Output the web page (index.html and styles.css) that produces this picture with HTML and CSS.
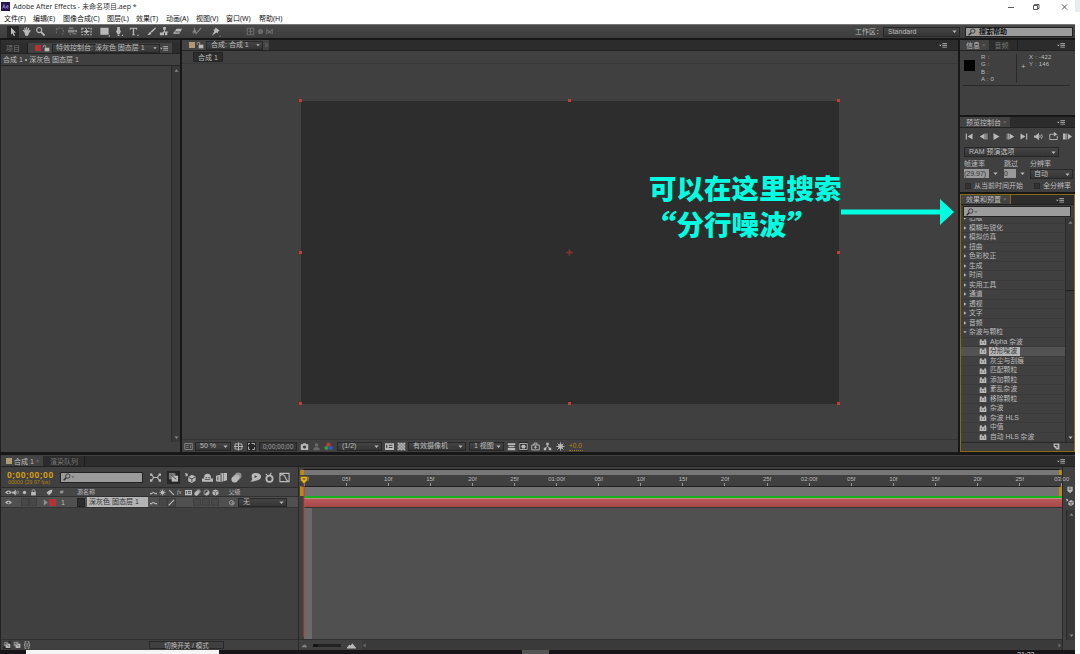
FILE: index.html
```html
<!DOCTYPE html>
<html lang="zh-CN">
<head>
<meta charset="utf-8">
<title>Adobe After Effects</title>
<link rel="stylesheet" href="styles.css">
</head>
<body>
<svg class="defs" aria-hidden="true">
  <symbol id="arrow" viewBox="0 0 12 12"><path d="M4 1.5l5 5-2.2.2 1.3 2.8-1.4.6-1.2-2.8L4 8.8z"/></symbol>
  <symbol id="hand" viewBox="0 0 12 12"><path d="M3.8 7L1.6 4.6l.9-.6 1.4 1.2L3.6 2l1-.2.9 2.8L5.7 1h1l.1 3.6L8 1.8l1 .3-.8 3.2L10 4.2l.7.6-2 3-1 2.7H4.6z"/></symbol>
  <symbol id="lens" viewBox="0 0 12 12"><circle cx="4.6" cy="4.4" r="2.8" class="ln"/><path d="M6.5 6.5l4 4" class="ln w2"/></symbol>
  <symbol id="find" viewBox="0 0 12 12"><circle cx="7.200" cy="4.600" r="3.300" class="ln"/><path d="M4.800 7L1 11" class="ln w2"/></symbol>
  <symbol id="rot" viewBox="0 0 12 12"><path d="M2 3l3-.2M3 8a4 4 0 1 1 6 1" class="ln dash"/></symbol>
  <symbol id="cam" viewBox="0 0 12 12"><path d="M1 4h7v1l3-1v3L8 6v1H1zM2 1.5h5V3H2zM3 8h1v2H3zM6 8h4v1H6z"/></symbol>
  <symbol id="anchor" viewBox="0 0 12 12"><path d="M1 2.5h10v7H1z" class="ln dash"/><path d="M6 3l1 2 3 1-3 1-1 2-1-2-3-1 3-1z"/></symbol>
  <symbol id="rect" viewBox="0 0 12 12"><path d="M1.500 2h9v7.500h-9zM12 9.500v2h-2z"/></symbol>
  <symbol id="pen" viewBox="0 0 12 12"><path d="M4.5 1h3v3l1.2 2L7 9H5L3.300 6l1.200-2zM5 9.500h2V11H5zM11 9v2H9z"/></symbol>
  <symbol id="type" viewBox="0 0 12 12"><path d="M2 1.800h8v2.200H9.200L8.800 3H6.700v6l1 .6v.6H4.300v-.6l1-.6V3H3.200l-.4 1H2zM11.500 9v2h-2z"/></symbol>
  <symbol id="brush" viewBox="0 0 12 12"><path d="M10 1.500L11 2.500 6.500 7 5 5.900zM4.700 6.300L6 7.500C5 9.500 3.500 10 1.500 9.800 3 9 3 7 4.700 6.300z"/></symbol>
  <symbol id="stamp" viewBox="0 0 12 12"><path d="M4.500 1h3v3h-1v2H10v1H9v3H6.500V7.200h-1V10H1V7h3V6h1.500V4h-1z"/></symbol>
  <symbol id="eraser" viewBox="0 0 12 12"><path d="M5 3h6L8 8.500H1z"/><path d="M3.500 6.500H9" class="cut"/></symbol>
  <symbol id="roto" viewBox="0 0 12 12"><path d="M3 2v3l-2 2h2l-.5 3L4 7l2 1-1-3 1-1H4V2z"/><path d="M11 2L5 9" class="ln"/></symbol>
  <symbol id="pin" viewBox="0 0 12 12"><path d="M6 1.500L10.500 5 9 6 8.500 8 7 7 2 10.500 4.800 5.500 3.500 4l2-.5zM11.500 10v1.500H10z"/></symbol>
  <symbol id="box" viewBox="0 0 12 12"><path d="M2.500 2.500h7v7h-7zM6 3v6M4 6h4" class="ln"/></symbol>
  <symbol id="dot" viewBox="0 0 12 12"><circle cx="6" cy="6" r="2.800"/></symbol>
  <symbol id="cutx" viewBox="0 0 12 12"><path d="M3 3v6M9 3v6M3 4l5 4M9 4L4 8" class="ln"/></symbol>
  <symbol id="lock" viewBox="0 0 12 12"><path d="M4 5.500h7v5.500H4z"/><path d="M5.500 5.500V3.500C5.500 1.500 2 1.500 2 3.500V5" class="ln"/></symbol>
  <symbol id="padlock" viewBox="0 0 12 12"><path d="M2 5h8v6H2z"/><path d="M3.500 5V3.500a2.500 2.500 0 0 1 5 0V5" class="ln"/></symbol>
  <symbol id="menu" viewBox="0 0 12 12"><path d="M0 5.500h4L2 7.700zM5 3.500h7v1.200H5zM5 6h7v1.200H5zM5 8.500h7v1.200H5z"/></symbol>
  <symbol id="down" viewBox="0 0 12 12"><path d="M1 3.500h10L6 9.500z"/></symbol>
  <symbol id="up" viewBox="0 0 12 12"><path d="M1 9h10L6 3z"/></symbol>
  <symbol id="right" viewBox="0 0 12 12"><path d="M3 1v10l7-5z"/></symbol>
  <symbol id="first" viewBox="0 0 12 12"><path d="M1 2h1.500v8H1zM10 2v8L3.500 6z"/></symbol>
  <symbol id="prev" viewBox="0 0 12 12"><path d="M7.500 2v8L1 6zM8.500 2h1v8h-1zM10.200 2h1v8h-1z"/></symbol>
  <symbol id="play" viewBox="0 0 12 12"><path d="M2 1.500v9L10 6z"/></symbol>
  <symbol id="next" viewBox="0 0 12 12"><path d="M4.500 2v8L11 6zM2.800 2h1v8h-1zM1 2h1v8H1z"/></symbol>
  <symbol id="ramplay" viewBox="0 0 12 12"><path d="M0 2h3.500v8H0zM4.500 2h1v8h-1zM6.500 2v8L12 6z"/></symbol>
  <symbol id="last" viewBox="0 0 12 12"><path d="M9.500 2H11v8H9.500zM2 2v8l6.500-4z"/></symbol>
  <symbol id="sound" viewBox="0 0 12 12"><path d="M0 4.500h2.500L6.500 1v10L2.500 7.500H0z"/><path d="M8 4v4M10 3q2 3 0 6" class="ln"/></symbol>
  <symbol id="loop" viewBox="0 0 12 12"><path d="M3 3H1v7h10V5M3 3h5" class="ln"/><path d="M6.500 0L11 3 6.500 6z"/></symbol>
  <symbol id="fx" viewBox="0 0 12 12"><path d="M1 4l1-2h2v2h4V2h2l1 2v6.500H1z"/><path d="M4 5.500v3M8 5.500v3" class="cut"/></symbol>
  <symbol id="frame" viewBox="0 0 12 12"><path d="M1 2h10v8H1z" class="ln"/><path d="M3 4h3v1H3zM3 7h3v1H3zM8 4h1v4H8z"/></symbol>
  <symbol id="grid" viewBox="0 0 12 12"><path d="M1.500 2.500h9v7h-9zM6 .5v11M0 6h12" class="ln"/></symbol>
  <symbol id="mask" viewBox="0 0 12 12"><path d="M2 4V2h2M6 2h4v2M10 7v3H7M4 10H2V6" class="ln"/></symbol>
  <symbol id="photo" viewBox="0 0 12 12"><path fill-rule="evenodd" d="M1 3h2.500l1-1.500h3l1 1.500H11v7.500H1zM6 4.500a2.200 2.200 0 1 0 .01 0z"/></symbol>
  <symbol id="expo" viewBox="0 0 12 12"><path d="M1 4h10v6.500H1zM4 1.500h4V4M4 1.500V4M6 5v4M4 7h4" class="ln"/></symbol>
  <symbol id="person" viewBox="0 0 12 12"><circle cx="6" cy="4" r="2.300"/><path d="M2 11V8.500L4 7h4l2 1.500V11z"/></symbol>
  <symbol id="rgb" viewBox="0 0 12 12"><circle cx="6" cy="3.500" r="2.800" fill="#c23a38"/><circle cx="3.200" cy="8" r="2.800" fill="#369a42"/><circle cx="8.800" cy="8" r="2.800" fill="#3655c8"/></symbol>
  <symbol id="roi" viewBox="0 0 12 12"><path fill-rule="evenodd" d="M0 1.500h12v9H0zM5 3.500v1.500h5V3.500zM5 6.500V8h5V6.500zM1.500 3.500H3V8H1.500z"/></symbol>
  <symbol id="checker" viewBox="0 0 12 12"><path d="M1 1h10v10H1z" opacity=".55"/><path d="M1 1h2v2H1zM5 1h2v2H5zM9 1h2v2H9zM3 3h2v2H3zM7 3h2v2H7zM1 5h2v2H1zM5 5h2v2H5zM9 5h2v2H9zM3 7h2v2H3zM7 7h2v2H7zM1 9h2v2H1zM5 9h2v2H5zM9 9h2v2H9z"/></symbol>
  <symbol id="pixel" viewBox="0 0 12 12"><path d="M1 1.500h10V4H1zM2 5h8v2H2zM1 8h10v3H1z"/></symbol>
  <symbol id="fast" viewBox="0 0 12 12"><path d="M1 2h10v8H1z" class="ln"/><path d="M4 3.500h4l1 2.500-1 2.500H4L3 6z"/></symbol>
  <symbol id="tree" viewBox="0 0 12 12"><path d="M4.300 1h3.400v3.400H4.300zM1 7.500h3.400V11H1zM7.600 7.500H11V11H7.600z"/><path d="M6 4v2L3 8M6 6l3 2" class="ln"/></symbol>
  <symbol id="burst" viewBox="0 0 12 12"><circle cx="6" cy="6" r="3.200"/><path d="M6 .5v11M.5 6h11M2 2l8 8M10 2l-8 8" class="ln"/></symbol>
  <symbol id="link" viewBox="0 0 12 12"><path d="M2 3l2 3-2 3M10 3L8 6l2 3M3 6h6" class="ln"/><path d="M-1 1.500h3.500v2.500H-1zM9.500 1.500H13v2.500H9.500zM-1 8h3.500v2.500H-1zM9.500 8H13v2.500H9.500z"/></symbol>
  <symbol id="copy" viewBox="0 0 12 12"><path d="M1 1h7v7H1z" opacity=".55"/><path d="M4 4h7v6.500H4z"/><path d="M3 3l6 5" class="cut"/></symbol>
  <symbol id="cube" viewBox="0 0 12 12"><path d="M0 1l3 1v2L1 5zM3.500 5.500L7.500 3 11.500 5v4.500L7.500 12l-4-2z"/><path d="M4 6l3.500 1.500V11M7.500 7.500L11 5.500" class="cut"/></symbol>
  <symbol id="cube3" viewBox="0 0 12 12"><path d="M1 3l5-2 5 2v6l-5 2.500L1 9z"/><path d="M1.500 3.500L6 5.500V11M6 5.500l4.500-2" class="cut"/></symbol>
  <symbol id="shy" viewBox="0 0 12 12"><path d="M0 7h2.200Q2 2 6 2t3.800 5H12v3.500H0z"/><path d="M4 6h1.500M7 6h1.500M3 8h6" class="cut"/></symbol>
  <symbol id="blend" viewBox="0 0 12 12"><path d="M0 4l5-1v8l-5-1zM4 2l4-1v9l-2 1V3zM8.500 1H12v8l-3.500 1z"/><path d="M2 5v4" class="cut"/></symbol>
  <symbol id="blur" viewBox="0 0 12 12"><circle cx="4" cy="8" r="3.500"/><circle cx="6" cy="6" r="3.500" opacity=".8"/><circle cx="8" cy="4" r="3.500" opacity=".65"/></symbol>
  <symbol id="brain" viewBox="0 0 12 12"><path fill-rule="evenodd" d="M2 10l-2 1.500L2.500 8Q0 1 6 1t6 4-6 4.500q-2 1.500-4 .5zM5 3.500v3l3-1.500z"/></symbol>
  <symbol id="clock" viewBox="0 0 12 12"><path d="M2 2l2 2M8 1L6 4" class="ln"/><circle cx="6" cy="7.300" r="3.400" class="ln w2"/></symbol>
  <symbol id="graph" viewBox="0 0 12 12"><path d="M1 1.500h10v9H1zM1 4q4-3 6 2t4 4" class="ln"/></symbol>
  <symbol id="eye" viewBox="0 0 12 12"><path fill-rule="evenodd" d="M0 6q6-7 12 0-6 6-12 0zM6 4.500a1.700 1.700 0 1 0 .01 0z"/></symbol>
  <symbol id="tag" viewBox="0 0 12 12"><path d="M1 6l5-4 5-1-1 5-5 5-1-2-2-1z"/></symbol>
  <symbol id="slash" viewBox="0 0 12 12"><path d="M2 2l8 8" class="ln w2"/></symbol>
  <symbol id="stroke" viewBox="0 0 12 12"><path d="M1 11L10.500 1.500" class="ln w2"/></symbol>
  <symbol id="flat" viewBox="0 0 12 12"><path d="M0 8h3q1-4 6 0h3" class="ln w2"/></symbol>
  <symbol id="adj" viewBox="0 0 12 12"><circle cx="6" cy="6" r="4.500" class="ln"/><path d="M9.200 2.800a4.500 4.500 0 0 1-6.400 6.400z"/></symbol>
  <symbol id="spiral" viewBox="0 0 12 12"><path d="M6 6q1-2 2.500 0T6 9 2.500 6 6 2.500 10.500 6 6 11" class="ln"/></symbol>
  <symbol id="braces" viewBox="0 0 12 12"><path d="M5 1H3v4L1.500 6 3 7v4h2M7 1h2v4l1.500 1L9 7v4H7M6 3v6" class="ln"/></symbol>
  <symbol id="hill" viewBox="0 0 12 12"><path d="M-1 10l4-5 2 1 2-3 6 7z"/></symbol>
  <symbol id="newdoc" viewBox="0 0 12 12"><path fill-rule="evenodd" d="M1 1h10v10H6L1 6zM3 3v2h3v3h2V3z"/></symbol>
  <symbol id="shield" viewBox="0 0 12 12"><path d="M2 1h8v6l-4 4-4-4z"/><path d="M4 3h4M4 5h4" class="cut"/></symbol>
</svg>

<div class="window">
  <header class="caption">
    <svg class="logo" viewBox="0 0 9 9"><rect width="9" height="9" fill="#281450"/><path d="M1.500 6.500L3 2.500l1.500 4M2 5.200h2M7.500 5.900q-2 1-2-1t1.900-1q.4 1-1.900 1" fill="none" stroke="#a894e6" stroke-width=".7"/></svg>
    <span class="caption-text">Adobe After Effects - 未命名项目.aep *</span>
    <svg class="winbtns" viewBox="0 0 60 10"><path d="M0 5.500h6M54 2.500l5 5M59 2.500l-5 5" /><path d="M25.500 3.500h4v4h-4zM26.500 3.500V2.500h4.500v4h-1.500" /></svg>
  </header>
  <nav class="menubar"><span>文件(F)</span><span>编辑(E)</span><span>图像合成(C)</span><span>图层(L)</span><span>效果(T)</span><span>动画(A)</span><span>视图(V)</span><span>窗口(W)</span><span>帮助(H)</span></nav>

  <div class="app">
    <div class="tools">
      <svg class="on"><use href="#arrow"/></svg><svg><use href="#hand"/></svg><svg><use href="#lens"/></svg><svg class="dim"><use href="#rot"/></svg><svg class="half"><use href="#cam"/></svg><svg><use href="#anchor"/></svg><svg><use href="#rect"/></svg><svg><use href="#pen"/></svg><svg><use href="#type"/></svg><svg><use href="#brush"/></svg><svg><use href="#stamp"/></svg><svg><use href="#eraser"/></svg><svg class="half"><use href="#roto"/></svg><svg><use href="#pin"/></svg><svg class="dim"><use href="#box"/></svg><svg class="dim"><use href="#dot"/></svg><svg class="dim"><use href="#cutx"/></svg>
      <span class="ws-label">工作区：</span>
      <div class="select ws">Standard<svg><use href="#down"/></svg></div>
      <div class="field help"><svg><use href="#find"/></svg>搜索帮助</div>
    </div>

    <div class="upper">
      <section class="panel effect-controls">
        <div class="tabs"><span class="tab off project">项目</span><div class="tab live"><i class="chip red"></i><svg><use href="#lock"/></svg><div class="select tabsel">特效控制台: 深灰色 固态层 1<svg><use href="#down"/></svg></div><svg class="pm"><use href="#menu"/></svg></div></div>
        <div class="crumb">合成 1 • 深灰色 固态层 1</div>
        <div class="ec-body"><div class="vscroll"><svg><use href="#up"/></svg><svg><use href="#down"/></svg></div></div>
      </section>

      <section class="panel comp">
        <div class="tabs"><div class="tab live"><i class="chip tan"></i><svg><use href="#lock"/></svg><div class="select compsel">合成: 合成 1<svg><use href="#down"/></svg></div><i class="close"></i></div><svg class="pm"><use href="#menu"/></svg></div>
        <div class="subtabs"><span>合成 1</span></div>
        <div class="viewer">
          <svg class="stage" viewBox="0 0 540 305"><rect x="1" y="1" width="538" height="303" fill="#2d2d2d"/><g fill="#c23c3a"><path d="M-1 -1h3v3h-3zM268 -1h3v3h-3zM537 -1h3v3h-3zM-1 151h3v3h-3zM537 151h3v3h-3zM-1 302h3v3h-3zM268 302h3v3h-3zM537 302h3v3h-3z"/></g><g fill="none" stroke="#8a3330" stroke-width=".8"><circle cx="269.500" cy="152.500" r="1.800"/><path d="M266 152.500h7M269.500 149v7"/></g></svg>
          <div class="note"><div>可以在这里搜索</div><div class="note2"><span class="ql">“</span><span>分行噪波</span><span class="qr">”</span></div></div>
          <svg class="pointer" viewBox="0 0 114 26"><path d="M0 10.500h99V0l14 13-14 13V15.500H0z" fill="#00ffe0"/></svg>
        </div>
        <div class="viewbar">
          <svg class="half"><use href="#frame"/></svg><div class="select">50 %<svg><use href="#down"/></svg></div><svg><use href="#grid"/></svg><svg class="on"><use href="#mask"/></svg><div class="time">0;00;00;00</div><svg><use href="#photo"/></svg><svg class="dim"><use href="#person"/></svg><svg><use href="#rgb"/></svg><div class="select">(1/2)<svg><use href="#down"/></svg></div><svg><use href="#roi"/></svg><svg><use href="#checker"/></svg><div class="select">有效摄像机<svg><use href="#down"/></svg></div><div class="select">1 视图<svg><use href="#down"/></svg></div><svg><use href="#pixel"/></svg><svg class="on"><use href="#fast"/></svg><svg><use href="#expo"/></svg><svg><use href="#tree"/></svg><svg><use href="#burst"/></svg><span class="exposure">+0.0</span>
        </div>
      </section>

      <aside class="side">
        <section class="panel info">
          <div class="tabs"><span class="tab live">信息<i>×</i></span><span class="tab off">音频</span><svg class="pm"><use href="#menu"/></svg></div>
          <div class="info-body"><i class="swatch"></i><div class="rgba"><span>R :</span><span>G :</span><span>B :</span><span>A : 0</span></div><i class="plus">+</i><div class="xy"><span>X : -422</span><span>Y : 146</span></div></div>
        </section>
        <section class="panel preview">
          <div class="tabs"><span class="tab live">预览控制台<i>×</i></span><svg class="pm"><use href="#menu"/></svg></div>
          <div class="transport"><svg><use href="#first"/></svg><svg><use href="#prev"/></svg><svg><use href="#play"/></svg><svg><use href="#next"/></svg><svg><use href="#last"/></svg><svg><use href="#sound"/></svg><svg><use href="#loop"/></svg><svg><use href="#ramplay"/></svg></div>
          <div class="select ram">RAM 预演选项<svg><use href="#down"/></svg></div>
          <div class="pgrid"><span>帧速率</span><span>跳过</span><span>分辨率</span><div class="combo"><b>(29.97)</b><svg><use href="#down"/></svg></div><div class="combo"><b>0</b><svg><use href="#down"/></svg></div><div class="select">自动<svg><use href="#down"/></svg></div></div>
          <div class="checks"><i></i><span>从当前时间开始</span><i></i><span>全分辨率</span></div>
        </section>
        <section class="panel effects">
          <div class="tabs"><span class="tab live">效果和预置<i>×</i></span><svg class="pm"><use href="#menu"/></svg></div>
          <div class="field fxsearch"><svg><use href="#find"/></svg><svg class="tiny"><use href="#down"/></svg></div>
          <div class="fx-main">
            <ul class="fxlist">
              <li><svg><use href="#right"/></svg>旧版</li><li><svg><use href="#right"/></svg>模糊与锐化</li><li><svg><use href="#right"/></svg>模拟仿真</li><li><svg><use href="#right"/></svg>扭曲</li><li><svg><use href="#right"/></svg>色彩校正</li><li><svg><use href="#right"/></svg>生成</li><li><svg><use href="#right"/></svg>时间</li><li><svg><use href="#right"/></svg>实用工具</li><li><svg><use href="#right"/></svg>通道</li><li><svg><use href="#right"/></svg>透视</li><li><svg><use href="#right"/></svg>文字</li><li><svg><use href="#right"/></svg>音频</li><li><svg><use href="#down"/></svg>杂波与颗粒</li>
              <li class="fx"><svg><use href="#fx"/></svg>Alpha 杂波</li><li class="fx sel"><svg><use href="#fx"/></svg><b>分形噪波</b></li><li class="fx"><svg><use href="#fx"/></svg>灰尘与刮痕</li><li class="fx"><svg><use href="#fx"/></svg>匹配颗粒</li><li class="fx"><svg><use href="#fx"/></svg>添加颗粒</li><li class="fx"><svg><use href="#fx"/></svg>紊乱杂波</li><li class="fx"><svg><use href="#fx"/></svg>移除颗粒</li><li class="fx"><svg><use href="#fx"/></svg>杂波</li><li class="fx"><svg><use href="#fx"/></svg>杂波 HLS</li><li class="fx"><svg><use href="#fx"/></svg>中值</li><li class="fx"><svg><use href="#fx"/></svg>自动 HLS 杂波</li>
            </ul>
            <div class="vscroll"><svg><use href="#up"/></svg><i class="thumb"></i><svg><use href="#down"/></svg></div>
          </div>
          <div class="fx-foot"><svg><use href="#newdoc"/></svg></div>
        </section>
      </aside>
    </div>

    <section class="timeline">
      <div class="tabs"><div class="tab live"><i class="chip tan"></i>合成 1<i class="x">×</i></div><span class="tab off">渲染队列</span><svg class="pm"><use href="#menu"/></svg></div>
      <div class="tl-main">
        <div class="tl-left">
          <div class="tl-head">
            <div class="tc"><b>0;00;00;00</b><small>00000 (29.97 fps)</small></div>
            <div class="field"><svg><use href="#find"/></svg><svg class="tiny"><use href="#down"/></svg></div>
            <svg><use href="#link"/></svg><svg class="on"><use href="#copy"/></svg><svg><use href="#cube"/></svg><svg><use href="#shy"/></svg><svg><use href="#blend"/></svg><svg><use href="#blur"/></svg><svg><use href="#brain"/></svg><svg><use href="#clock"/></svg><svg><use href="#graph"/></svg>
          </div>
          <div class="cols"><svg><use href="#eye"/></svg><svg><use href="#sound"/></svg><svg><use href="#dot"/></svg><svg><use href="#padlock"/></svg><svg><use href="#tag"/></svg><span>#</span><span>源名称</span><svg><use href="#flat"/></svg><svg><use href="#burst"/></svg><svg><use href="#slash"/></svg><em>fx</em><svg><use href="#roi"/></svg><svg><use href="#blur"/></svg><svg><use href="#adj"/></svg><svg><use href="#cube3"/></svg><span>父级</span></div>
          <div class="layer"><svg><use href="#eye"/></svg><i class="cell"></i><i class="cell"></i><svg class="half"><use href="#right"/></svg><i class="chip red"></i><span>1</span><i class="solid"></i><b>深灰色 固态层 1</b><svg><use href="#flat"/></svg><i class="cell"></i><svg class="cell"><use href="#stroke"/></svg><i class="cell"></i><i class="cell"></i><i class="cell"></i><svg><use href="#spiral"/></svg><div class="select">无<svg><use href="#down"/></svg></div></div>
          <div class="tl-space"></div>
          <div class="tl-foot"><svg class="on"><use href="#copy"/></svg><svg><use href="#copy"/></svg><svg><use href="#braces"/></svg><div class="toggle">切换开关 / 模式</div></div>
        </div>
        <div class="tl-right">
          <div class="navigator"></div>
          <div class="ruler"><span>:00f</span><span>05f</span><span>10f</span><span>15f</span><span>20f</span><span>25f</span><span>01:00f</span><span>05f</span><span>10f</span><span>15f</span><span>20f</span><span>25f</span><span>02:00f</span><span>05f</span><span>10f</span><span>15f</span><span>20f</span><span>25f</span><span>03:00</span></div>
          <div class="workarea"></div>
          <div class="cached"></div>
          <div class="bar"></div>
          <div class="lane"><i></i></div>
          <div class="tl-zoom"><svg class="s"><use href="#hill"/></svg><i class="slider"></i><svg><use href="#hill"/></svg><div class="hscroll"><svg class="flip dim"><use href="#right"/></svg><svg class="dim"><use href="#right"/></svg></div></div>
          <svg class="cti" viewBox="0 0 10 162"><path d="M4 8v162" stroke="#c43c3c"/><path d="M.5 1.500h7V5L4 9 .5 5z" fill="#e2b322" stroke="#6b5208" stroke-width=".6"/><path d="M2.500 3h3v2h-3z" fill="#a07610"/></svg>
        </div>
        <div class="tl-edge"><svg class="marker"><use href="#shield"/></svg><svg class="lay"><use href="#cube"/></svg><div class="vscroll"><svg><use href="#up"/></svg><svg><use href="#down"/></svg></div></div>
      </div>
    </section>
    <footer class="taskbar"><i class="tb-white"></i><i class="tb-grey"></i><span>21:22</span></footer>
  </div>
</div>
</body>
</html>
```

FILE: styles.css
```css
* { box-sizing: border-box; }
body {
  margin: 0; width: 1080px; height: 654px; overflow: hidden; background: #fff;
  font: 7px/9px "Liberation Sans", "Noto Sans CJK SC", sans-serif;
  color: #bcbcbc; white-space: nowrap; --ink: #b9b9b9;
}
.defs { position: absolute; width: 0; height: 0; }
svg { display: block; width: 10px; height: 10px; fill: #b9b9b9; stroke: none; flex: none; overflow: visible; }
.ln { fill: none; stroke: var(--ink); stroke-width: 1.2; }
.w2 { stroke-width: 2; }
.dash { stroke-dasharray: 2 1.2; }
.cut { fill: none; stroke: #444; stroke-width: 1; }
.dim { opacity: .35; }
.half { opacity: .6; }
.on { background: #262626; }
.flip { transform: scaleX(-1); }
i, em { font-style: normal; }
em { font-style: italic; font-family: "Liberation Serif", serif; }
b { font-weight: normal; }

.window { width: 1080px; height: 654px; display: flex; flex-direction: column; }
.caption { height: 12px; flex: none; display: flex; align-items: center; padding-left: 1px; color: #333; background: linear-gradient(90deg, #fff 1075px, #e9ecf0 1075px); }
.logo { width: 9px; height: 9px; }
.caption-text { margin: 1px 0 0 3px; font: 7px/11px "Noto Sans", "Noto Sans CJK SC", sans-serif; }
.winbtns { width: 60px; height: 10px; margin: 1px 12px 0 auto; fill: none; stroke: #333; stroke-width: .8; }
.menubar { height: 12px; flex: none; display: grid; align-items: center; padding-left: 4px; color: #111; font-family: "Noto Sans", "Noto Sans CJK SC", sans-serif;
  grid-template-columns: 29px 30px 44px 29px 30px 30px 30px 33px 30px; }

.app { width: 1075px; height: 630px; display: flex; flex-direction: column; background: #171717; }
.tools { height: 14px; flex: none; display: grid; align-items: center; padding-left: 7px; border-top: 1px solid #777; background: linear-gradient(#484848, #3c3c3c);
  grid-template-columns: 14px 14px 19px 13px 14px 18px 14px 15px 18px 13px 13px 19px 19px 35px 10px 9px 591px 28px 82px 108px; }
.tools > svg { width: 11px; height: 11px; }
.tools > svg.on { width: 12px; height: 12px; }
.select { display: flex; justify-content: space-between; align-items: center; height: 9px; padding: 0 2px 0 4px; background: linear-gradient(#444, #353535); border: 1px solid #272727; line-height: 8px; }
.select svg { width: 5px; height: 5px; }
.select.ws { width: 77px; height: 10px; }
.field { display: flex; align-items: center; height: 9px; background: #9b9b9b; border: 1px solid #222; color: #111; --ink: #2c2c2c; }
.field svg { width: 8px; height: 8px; margin-left: 2px; fill: #444; }
.field svg.tiny { width: 4px; height: 4px; margin-left: 0; fill: #666; }
.help { width: 108px; height: 10px; gap: 3px; font-weight: bold; }

.upper { height: 417px; flex: none; display: grid; grid-template-columns: 180px 776px 115px; column-gap: 2px; padding: 2px 0 3px; }
.panel { display: flex; flex-direction: column; background: #404040; min-width: 0; min-height: 0; }
.tabs { display: flex; flex: none; height: 11px; background: #2c2c2c; border-bottom: 1px solid #222; }
.tab { display: flex; align-items: center; padding: 0 5px; }
.tab.live { background: #434343; }
.tab.off { color: #777; border-right: 1px solid #1c1c1c; }
.tab i:not(.chip) { color: #777; margin-left: 2px; font-size: 6px; }
.pm { width: 8px; height: 8px; margin: 1px 10px 0 auto; }
.chip { width: 6px; height: 6px; flex: none; }
.red { background: #b43236; }
.tan { background: #ae9a75; }
.effect-controls { border-left: 1px solid #222; padding-bottom: 10px; }
.effect-controls .tabs { height: 14px; border-top: 3px solid #303030; }
.effect-controls .project { width: 27px; }
.effect-controls .tab.live { width: 144px; padding: 0 0 0 7px; }
.tab svg { width: 8px; height: 8px; }
.tab.live .select svg { width: 4px; height: 4px; }
.select.tabsel { width: 108px; margin-left: 2px; padding-left: 3px; }
.tab.live svg.pm { margin: 0 4px 0 auto; }
.effect-controls .tab > svg:nth-child(2) { margin-left: 1px; }
.crumb { height: 12px; flex: none; padding: 1px 2px; border-bottom: 1px solid #252525; }
.ec-body { flex: 1; display: flex; justify-content: flex-end; }
.vscroll { width: 9px; display: flex; flex-direction: column; align-items: center; justify-content: space-between; padding: 2px 0; background: #383838; border-left: 1px solid #2a2a2a; }
.vscroll svg { width: 5px; height: 5px; opacity: .6; }

.comp .tab { padding: 0 1px 0 7px; }
.comp .tab > svg { margin-left: 1px; }
.select.compsel { width: 57px; margin-left: 2px; }
.close { width: 3px; height: 4px; background: #555; }
.comp .pm { margin-right: 11px; }
.subtabs { height: 13px; flex: none; padding: 1px 0 0 11px; border-bottom: 1px solid #383838; }
.subtabs span { display: block; width: 30px; height: 10px; background: #2c2c2c; border: 1px solid #242424; text-align: center; line-height: 9px; }
.viewer { flex: 1; min-height: 0; position: relative; padding: 36px 0 0 118px; }
.stage { width: 540px; height: 305px; }
.note { position: absolute; left: 467px; top: 106px; color: #00ffe0; font: 900 27.500px/35.500px "Noto Sans CJK SC", sans-serif; }
.note2 { display: flex; }
.ql, .qr { display: block; width: 27.500px; }
.ql { transform: scale(1.250, 1.100) skewX(-10deg); transform-origin: 100% 30%; }
.qr { transform: scale(1.250, 1.100) skewX(-10deg); transform-origin: 0 30%; }
.pointer { position: absolute; left: 659px; top: 135px; width: 114px; height: 26px; z-index: 2; }
.viewbar { height: 13px; flex: none; display: grid; align-items: center; padding-left: 2px; border-top: 1px solid #353535;
  grid-template-columns: 11px 39px 13px 12px 41px 12px 12px 13px 48px 12px 11px 61px 38px 12px 12px 12px 13px 13px 20px; }
.viewbar > svg { width: 9px; height: 9px; }
.viewbar .select { margin-right: 3px; }
.viewbar .time { width: 38px; height: 9px; line-height: 8px; text-align: center; border: 1px solid #282828; background: #383838; color: #999; font-size: 6.500px; }
.exposure { width: 14px; color: #b88616; border-bottom: 1px dotted #9a7012; line-height: 8px; font-size: 6.500px; }

.side { display: flex; flex-direction: column; gap: 2px; min-width: 0; min-height: 0; }
.side .tab { padding: 0 3px 0 6px; }
.info { height: 75px; flex: none; }
.info .off { padding-right: 8px; }
.info-body { height: 35px; margin: 0 5px 0 3px; display: grid; grid-template-columns: 16px 38px 12px 30px; border-bottom: 1px solid #292929; padding-top: 3px; font-size: 6px; line-height: 7.300px; letter-spacing: .2px; }
.swatch { width: 11px; height: 11px; margin-top: 6px; margin-left: 1px; background: #000; }
.rgba, .xy { display: flex; flex-direction: column; }
.rgba { border-right: 1px solid #292929; padding-left: 2px; height: 29px; }
.plus { margin: 9px 0 0 4px; font-size: 8px; }
.preview { height: 75px; flex: none; }
.transport { display: grid; grid-template-columns: repeat(4, 13.500px) 15px 15px 14px 14px; padding: 4px 0 0 5px; height: 19px; }
.transport svg { width: 9px; height: 9px; }
.ram { width: 95px; margin-left: 4px; height: 10px; }
.pgrid { margin: 2px 2px 0 4px; display: grid; grid-template-columns: 40px 26px 43px; row-gap: 1px; }
.pgrid .select { height: 10px; padding-left: 3px; }
.combo { display: flex; align-items: center; gap: 4px; height: 9px; }
.combo b { height: 9px; width: 25px; line-height: 9px; background: #999; color: #333; }
.combo:nth-child(5) b { width: 12px; }
.combo svg { width: 5px; height: 5px; }
.checks { display: grid; grid-template-columns: 9px 60px 9px 30px; align-items: center; margin: 2px 0 0 5px; }
.checks i { width: 6px; height: 6px; background: #333; border: 1px solid #2a2a2a; }
.effects { flex: 1; border: 1px solid #8c6a12; min-height: 0; }
.effects .tabs .tab { border-right: 1px solid #8c6a12; padding-left: 5px; }
.effects .tabs { height: 10px; }
.fxsearch { height: 11px; flex: none; margin: 1px 3px 1px 2px; background: #9c9c9c; }
.fx-main { flex: 1; display: flex; min-height: 0; overflow: hidden; }
.fxlist { flex: 1; margin: -4px 0 0; padding: 0; list-style: none; }
.fxlist li { display: flex; align-items: center; height: 9.520px; padding-left: 2px; gap: 2px; border-bottom: 1px solid #3a3a3a; font-size: 6.800px; line-height: 8.500px; }
.fxlist li svg { width: 4px; height: 4px; }
.fxlist li.fx { padding-left: 18px; gap: 3px; }
.fxlist li.fx svg { width: 8px; height: 8px; }
.fxlist li.sel { background: #525252; }
.sel b { background: #b5b5b5; color: #333; margin-left: -1px; padding: 0 3px 0 1px; }
.fx-main .vscroll { justify-content: flex-start; }
.thumb { width: 8px; height: 66px; margin-top: 0; border-bottom: 1px solid #1e1e1e; }
.fx-main .vscroll svg:last-child { margin-top: auto; opacity: 1; }
.fx-foot { height: 9px; flex: none; border-top: 1px solid #2a2a2a; display: flex; justify-content: flex-end; padding-right: 14px; }
.fx-foot svg { width: 7px; height: 7px; }

.timeline { height: 195px; flex: none; border-left: 1px solid #222; display: flex; flex-direction: column; background: #404040; padding-top: 1px; }
.timeline .tab.live { width: 42px; gap: 2px; padding: 0 2px 0 5px; }
.timeline .tab.live .x { margin-left: 0; }
.timeline .tab.off { width: 42px; padding-left: 7px; }
.tl-main { flex: 1; display: grid; grid-template-columns: 298px 763px 13px; min-height: 0; }
.tl-left, .tl-right { display: flex; flex-direction: column; min-width: 0; min-height: 0; }
.tl-left { border-right: 1px solid #292929; }
.tl-head { height: 20px; flex: none; display: grid; align-items: center; padding-left: 5px; grid-template-columns: 54px 90px 18px 17px 17px 14px 14.500px 19px 14px 15px 14px; }
.tl-head > svg { width: 11px; height: 11px; }
.tl-head > svg.on { outline: 1px solid #262626; }
.tl-head .field { width: 83px; height: 11px; }
.tc { color: #d39a12; display: flex; flex-direction: column; padding-left: 1px; }
.tc b { font: bold 8.300px/9px "Noto Sans", sans-serif; letter-spacing: .65px; }
.tc small { font-size: 5.400px; line-height: 6px; padding-left: 1px; color: #b1820f; }
.cols { height: 10px; flex: none; display: grid; align-items: center; padding-left: 4px; background: #464646; border-top: 1px solid #2c2c2c; border-bottom: 1px solid #303030; font-size: 6px; grid-template-columns: 7px 9px 9px 16px 14px 17px 73px 9px 9px 9px 8px 9px 9px 8.500px 17px 26px; }
.cols svg, .layer > svg { width: 7px; height: 7px; }
.layer { height: 11px; flex: none; display: grid; align-items: center; padding-left: 4px; background: #505050; border-bottom: 1px solid #333; grid-template-columns: 16px 8px 13px 7px 12px 16px 10px 63px 9px 8px 26px 9px 9px 17px 10px 51px; }
.layer .chip { width: 7px; height: 7px; }
.cell { width: 8px; height: 8px; background: #484848; border: 1px solid #3f3f3f; }
.layer > svg.cell { width: 9px; height: 9px; }
.solid { width: 8px; height: 9px; background: #2d2d2d; border: 1px solid #222; }
.layer b { height: 10px; width: 61px; padding-left: 2px; background: #b4b4b4; color: #333; line-height: 10px; }
.layer .select { width: 49px; }
.tl-space { flex: 1; }
.tl-foot { height: 11px; flex: none; display: flex; align-items: center; padding-left: 2px; gap: 2px; border-top: 1px solid #303030; }
.tl-foot svg { width: 8px; height: 8px; }
.toggle { width: 75px; height: 8px; margin-left: 116px; border: 1px solid #282828; text-align: center; line-height: 7px; font-size: 6.500px; }
.tl-right { position: relative; }
.navigator { height: 6px; flex: none; margin: 2px 0 0 1px; background: #777; border-top: 1px solid #161616; border-left: 4px solid #b88a16; border-right: 3px solid #b88a16; border-radius: 3px 3px 0 0; }
.ruler { height: 11px; flex: none; display: grid; grid-template-columns: repeat(19, 42.100px); margin-left: -16px; width: 800px; }
.ruler span { text-align: center; font-size: 6px; line-height: 8px; background: linear-gradient(#999, #999) 50% 100% / 1px 3px no-repeat; }
.workarea { height: 10px; flex: none; background: #737373; border-top: 1px solid #202020; border-left: 4px solid #b88a16; border-right: 3px solid #b88a16; margin-left: 1px; }
.cached { height: 2px; flex: none; margin-left: 5px; background: #15b21f; }
.bar { height: 10px; flex: none; margin: 0 0 0 5px; background: linear-gradient(#b95a5a, #a74848); border-top: 1px solid #c98888; border-bottom: 1px solid #333; }
.lane { flex: 1; margin-left: 5px; background: #505050; display: flex; }
.lane i { width: 8px; background: #6a6a6a; }
.tl-zoom { height: 11px; flex: none; display: flex; align-items: center; border-top: 1px solid #303030; padding-left: 3px; gap: 6px; }
.tl-zoom svg { width: 9px; height: 9px; }
.tl-zoom svg.s { width: 5px; height: 5px; opacity: .6; }
.slider { width: 28px; height: 3px; background: #222; border-left: 5px solid #151515; }
.hscroll { flex: 1; height: 10px; display: flex; align-items: center; justify-content: space-between; background: #3a3a3a; }
.tl-zoom .hscroll svg { width: 5px; height: 5px; }
.cti { position: absolute; left: 1px; top: 8px; width: 10px; height: 162px; overflow: hidden; }
.tl-edge { display: flex; flex-direction: column; padding: 19px 0 0 3px; border-left: 1px solid #292929; }
.tl-edge > svg { width: 8px; height: 8px; margin-bottom: 4px; }
.tl-edge .vscroll { flex: 1; margin-bottom: 10px; }
.taskbar { flex: 1; display: flex; background: #171519; min-height: 0; overflow: hidden; }
.tb-white { width: 193px; margin-left: 26px; background: #f5f5f5; }
.tb-grey { width: 27px; margin-left: 303px; background: #555; }
.taskbar span { margin-left: 468px; color: #ddd; line-height: 9px; }
```
